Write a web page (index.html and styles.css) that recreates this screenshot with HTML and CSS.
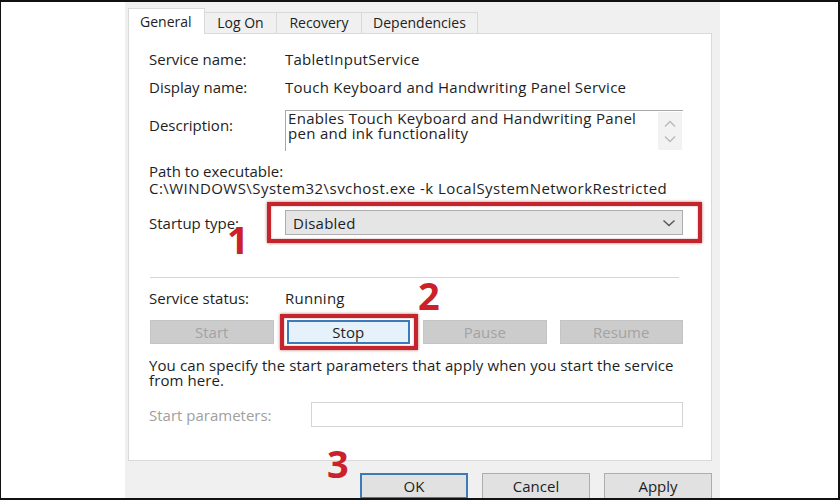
FILE: index.html
```html
<!DOCTYPE html>
<html>
<head>
<meta charset="utf-8">
<link rel="stylesheet" href="styles.css">
</head>
<body>
<div class="frame">
  <div class="dialog">
    <div class="tabs">
      <div class="tab active">General</div>
      <div class="tab">Log On</div>
      <div class="tab">Recovery</div>
      <div class="tab">Dependencies</div>
    </div>
    <div class="page">
      <div class="row r-name"><span class="lbl">Service name:</span><span class="val">TabletInputService</span></div>
      <div class="row r-display"><span class="lbl">Display name:</span><span class="val">Touch Keyboard and Handwriting Panel Service</span></div>
      <div class="row r-desc">
        <span class="lbl lbl-desc">Description:</span>
        <div class="textbox">
          <div class="tb-text"><div>Enables Touch Keyboard and Handwriting Panel</div><div>pen and ink functionality</div></div>
          <div class="tb-scroll">
            <svg width="12" height="8" viewBox="0 0 12 8"><path d="M1 6.5 L6 1.5 L11 6.5" fill="none" stroke="#b8b8b8" stroke-width="1.3"/></svg>
            <svg width="12" height="8" viewBox="0 0 12 8"><path d="M1 1.5 L6 6.5 L11 1.5" fill="none" stroke="#b8b8b8" stroke-width="1.3"/></svg>
          </div>
        </div>
      </div>
      <div class="path-lbl">Path to executable:</div>
      <div class="path-val">C:\WINDOWS\System32\svchost.exe -k LocalSystemNetworkRestricted</div>
      <div class="row r-startup">
        <span class="lbl">Startup type:</span>
        <div class="combo">
          <span class="val">Disabled</span>
          <svg width="14" height="8" viewBox="0 0 14 8"><path d="M1.5 1.5 L7 6.5 L12.5 1.5" fill="none" stroke="#555" stroke-width="1.4"/></svg>
          <span class="mark mark-combo"></span>
          <span class="num num1">1</span>
        </div>
      </div>
      <div class="sep"></div>
      <div class="row r-status"><span class="lbl">Service status:</span><span class="val">Running</span><span class="num num2">2</span></div>
      <div class="svc-buttons">
        <div class="btn disabled">Start</div>
        <div class="btn stop">Stop<span class="mark mark-stop"></span></div>
        <div class="btn disabled">Pause</div>
        <div class="btn disabled">Resume</div>
      </div>
      <div class="hint"><div>You can specify the start parameters that apply when you start the service</div><div>from here.</div></div>
      <div class="row r-params">
        <span class="lbl lbl-params">Start parameters:</span>
        <div class="input"></div>
      </div>
    </div>
    <div class="actions">
      <span class="num num3">3</span>
      <div class="btn act ok">OK</div>
      <div class="btn act">Cancel</div>
      <div class="btn act">Apply</div>
    </div>
  </div>
</div>
</body>
</html>
```
FILE: styles.css
```css
* { box-sizing: border-box; }
html, body { margin: 0; padding: 0; background: #fff; }
body { font-family: "Open Sans", "Noto Sans", sans-serif; font-size: 15px; color: #1e1e1e; }

.frame {
  width: 840px; height: 500px;
  border: 2px solid #111;
  border-left-width: 1px;
  border-right-width: 2px;
  background: #fff;
  padding-left: 124px;
  overflow: hidden;
}
.dialog {
  width: 595px; height: 496px;
  background: #f0f0f0;
  padding: 6px 8px 0 3px;
  position: relative;
}

.tabs { display: flex; height: 25px; align-items: flex-end; }
.tab {
  height: 21px;
  border: 1px solid #d9d9d9;
  border-bottom: none;
  border-left: none;
  background: #f0f0f0;
  line-height: 20px;
  padding: 0 8px;
  font-size: 14px;
  color: #222;
}
.tab:nth-child(2) { width: 72px; text-align: center; }
.tab:nth-child(3) { width: 85px; text-align: center; }
.tab:nth-child(4) { width: 116px; text-align: center; }
.tab.active {
  width: 77px;
  height: 26px;
  margin-bottom: -1px;
  background: #fff;
  border: 1px solid #d9d9d9;
  border-bottom: none;
  line-height: 26px;
  padding: 0 0 0 11px;
  position: relative;
  z-index: 1;
}

.page {
  background: #fff;
  border: 1px solid #d9d9d9;
  height: 428px;
  padding: 16px 28px 0 20px;
}

.row { display: flex; align-items: center; }
.lbl { width: 136px; flex: none; }
.val { letter-spacing: 0.25px; }
.row.r-name, .row.r-display { height: 18px; line-height: 18px; }
.row.r-display { margin-top: 10px; }

.row.r-desc { margin-top: 14px; align-items: flex-start; }
.lbl-desc { padding-top: 5px; }
.textbox {
  width: 399px; height: 41px;
  border-top: 1px solid #a8a8a8;
  border-left: 1px solid #a8a8a8;
  display: flex;
  line-height: 15px;
  position: relative;
}
.tb-text { flex: 1; padding: 0 4px 0 2px; color: #222; letter-spacing: 0.3px; white-space: nowrap; }
.tb-scroll {
  width: 24px; margin-top: 1px; height: 38px; margin-right: 1px;
  background: #f2f2f2;
  display: flex; flex-direction: column; align-items: center; justify-content: space-around;
  padding: 4px 0;
  flex: none;
}
.tb-scroll svg { display: block; }

.path-lbl { margin-top: 12px; line-height: 17px; }
.path-val { line-height: 17px; letter-spacing: 0.45px; white-space: nowrap; }

.row.r-startup { margin-top: 13px; }
.combo {
  position: relative;
  width: 400px; height: 25px;
  background: #e5e5e5;
  border: 1px solid #adadad;
  display: flex; align-items: center; justify-content: space-between;
  padding: 0 6px 0 7px;
}
.combo svg { display: block; }

.mark {
  position: absolute;
  border: 4px solid #c4252c;
  box-shadow: 0 0 3px rgba(120, 0, 0, 0.55), inset 0 0 2px rgba(120, 0, 0, 0.45);
  pointer-events: none;
}
.mark-combo { left: -19px; right: -20px; top: -9px; bottom: -9px; }
.mark-stop { left: -9px; right: -10px; top: -8px; bottom: -8px; }

.num {
  position: absolute;
  font-family: "Open Sans", "Noto Sans", sans-serif;
  font-weight: 700;
  color: #cd2129;
  font-size: 38px;
  line-height: 38px;
  letter-spacing: 0;
}
.num1 { left: -59px; top: 9px; }
.row.r-status { position: relative; }
.num2 { left: 269px; top: -13px; }
.num3 { left: 199px; top: -29px; }

.sep { margin-top: 42px; height: 1px; background: #d6d6d6; width: 529px; margin-left: 1px; }

.row.r-status { margin-top: 11px; height: 18px; line-height: 18px; }

.svc-buttons {
  margin-top: 13px;
  margin-left: 1px;
  width: 533px;
  display: grid;
  grid-template-columns: repeat(4, 1fr);
  column-gap: 13px;
}
.btn {
  height: 24px;
  line-height: 22px;
  text-align: center;
  border: 1px solid #adadad;
  background: #e1e1e1;
  color: #1e1e1e;
  position: relative;
}
.btn.disabled { background: #cccccc; border-color: #c4c4c4; color: #a3a3a3; }
.btn.stop { background: #e5f1fb; border: 2px solid #3d7ab8; line-height: 20px; }

.hint { margin-top: 14px; line-height: 15px; white-space: nowrap; letter-spacing: 0.1px; }

.row.r-params { margin-top: 14px; }
.lbl-params { width: 162px; color: #a0a0a0; }
.input { width: 372px; height: 25px; border: 1px solid #d5d5d5; background: #fff; }

.actions {
  position: relative;
  display: flex; justify-content: flex-end; gap: 14px;
  margin-top: 12px;
}
.btn.act { width: 108px; height: 26px; line-height: 24px; }
.btn.ok { border: 2px solid #3d7ab8; line-height: 22px; }
```
